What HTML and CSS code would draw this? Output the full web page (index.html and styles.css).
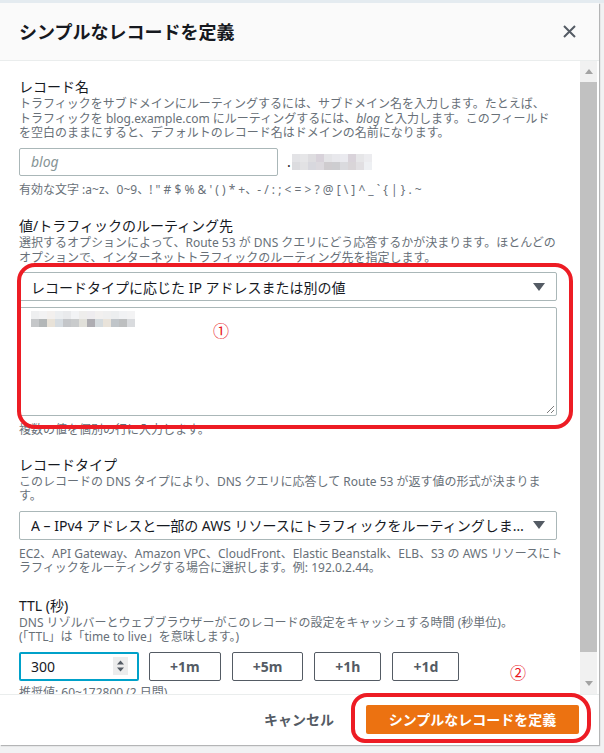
FILE: index.html
```html
<!DOCTYPE html>
<html lang="ja">
<head>
<meta charset="utf-8">
<title>シンプルなレコードを定義</title>
<link rel="stylesheet" href="styles.css">
</head>
<body>
<div class="modal">
  <header class="modal-header">
    <h2 class="title">シンプルなレコードを定義</h2>
    <svg class="close" viewBox="0 0 13 13" aria-label="閉じる"><path d="M1 1L12 12M12 1L1 12"/></svg>
  </header>

  <div class="modal-main">
    <div class="content">
      <section class="field">
        <div class="label">レコード名</div>
        <p class="desc">トラフィックをサブドメインにルーティングするには、サブドメイン名を入力します。たとえば、<br>トラフィックを blog.example.com にルーティングするには、<i>blog</i> と入力します。このフィールド<br>を空白のままにすると、デフォルトのレコード名はドメインの名前になります。</p>
        <div class="name-row">
          <div class="input"><span class="placeholder">blog</span></div>
          <span class="dot">.</span>
          <span class="blur blur-domain"></span>
        </div>
        <p class="hint">有効な文字 :a~z、0~9、! " # $ % &amp; ' ( ) * +、- / : ; &lt; = &gt; ? @ [ \ ] ^ _ ` { | } . ~</p>
      </section>

      <section class="field">
        <div class="label">値/トラフィックのルーティング先</div>
        <p class="desc">選択するオプションによって、Route 53 が DNS クエリにどう応答するかが決まります。ほとんどの<br>オプションで、インターネットトラフィックのルーティング先を指定します。</p>
        <div class="select">
          <span class="select-text">レコードタイプに応じた IP アドレスまたは別の値</span>
          <svg class="caret" viewBox="0 0 12 8"><path d="M0 0H12L6 8Z"/></svg>
        </div>
        <div class="textarea">
          <span class="blur blur-value"></span>
          <svg class="resize" viewBox="0 0 10 10"><path d="M9 2L2 9M9 6L6 9"/></svg>
        </div>
        <p class="hint">複数の値を個別の行に入力します。</p>
      </section>

      <section class="field field-type">
        <div class="label">レコードタイプ</div>
        <p class="desc">このレコードの DNS タイプにより、DNS クエリに応答して Route 53 が返す値の形式が決まりま<br>す。</p>
        <div class="select">
          <span class="select-text">A – IPv4 アドレスと一部の AWS リソースにトラフィックをルーティングします</span>
          <svg class="caret" viewBox="0 0 12 8"><path d="M0 0H12L6 8Z"/></svg>
        </div>
        <p class="hint">EC2、API Gateway、Amazon VPC、CloudFront、Elastic Beanstalk、ELB、S3 の AWS リソースにト<br>ラフィックをルーティングする場合に選択します。例: 192.0.2.44。</p>
      </section>

      <section class="field field-ttl">
        <div class="label">TTL (秒)</div>
        <p class="desc">DNS リゾルバーとウェブブラウザーがこのレコードの設定をキャッシュする時間 (秒単位)。<br>(「TTL」は「time to live」を意味します。)</p>
        <div class="ttl-row">
          <div class="num-input">
            <span>300</span>
            <svg class="spinner" viewBox="0 0 15 18"><rect width="15" height="18"/><path d="M4 7.5H11L7.5 3.5Z M4 10.5H11L7.5 14.5Z"/></svg>
          </div>
          <span class="btn">+1m</span>
          <span class="btn">+5m</span>
          <span class="btn">+1h</span>
          <span class="btn">+1d</span>
        </div>
        <p class="hint constraint">推奨値: 60~172800 (2 日間)</p>
      </section>
    </div>

    <div class="scrollbar">
      <div class="sb-btn"><svg viewBox="0 0 8 5"><path d="M0 5H8L4 0Z"/></svg></div>
      <div class="sb-thumb"></div>
      <div class="sb-rest"></div>
      <div class="sb-btn"><svg viewBox="0 0 8 5"><path d="M0 0H8L4 5Z"/></svg></div>
    </div>
  </div>

  <footer class="modal-footer">
    <span class="cancel">キャンセル</span>
    <span class="primary">シンプルなレコードを定義</span>
  </footer>

  <div class="mark mark-1"></div>
  <div class="mark mark-2"></div>
  <span class="num num-1">①</span>
  <span class="num num-2">②</span>
</div>
</body>
</html>
```

FILE: styles.css
```css
html, body {
  margin: 0;
  padding: 0;
}

body {
  width: 604px;
  height: 753px;
  overflow: hidden;
  background: linear-gradient(#e4ebf0 0 3px, #f1f2f3 3px);
  font-family: "Noto Sans", "Noto Sans CJK JP", sans-serif;
  color: #16191f;
}

.modal {
  position: relative;
  width: 599px;
  height: 742px;
  margin-top: 3px;
  background: #fff;
  display: flex;
  flex-direction: column;
  box-shadow: 1px 1px 1px rgba(0, 0, 0, 0.25);
}

.modal-header {
  flex: none;
  height: 58px;
  box-sizing: border-box;
  background: #fafafa;
  border-bottom: 1px solid #eaeded;
  display: flex;
  align-items: center;
  justify-content: space-between;
  padding: 0 23px 0 19px;
}

.title {
  margin: 0;
  font-size: 18px;
  line-height: 24px;
  font-weight: 700;
  color: #16191f;
}

.close {
  width: 13px;
  height: 13px;
  fill: none;
  stroke: #545b64;
  stroke-width: 2;
}

.modal-main {
  flex: 1;
  min-height: 0;
  display: flex;
  padding-right: 2px;
}

.content {
  flex: 1;
  min-width: 0;
  overflow: hidden;
  padding: 17px 23px 0 19px;
}

.field + .field {
  margin-top: 20px;
}

.field-type {
  margin-top: 18px !important;
}

.field-ttl {
  margin-top: 21px !important;
}

.label {
  font-size: 14px;
  line-height: 18px;
  color: #16191f;
}

.desc,
.hint {
  margin: 1px 0 0;
  font-size: 12px;
  line-height: 14.5px;
  color: #687078;
  white-space: nowrap;
}

.hint {
  margin-top: 7px;
}

.desc i {
  font-style: italic;
}

.name-row {
  margin-top: 7px;
  display: flex;
  align-items: center;
}

.input {
  width: 259px;
  height: 28px;
  box-sizing: border-box;
  border: 1px solid #aab7b8;
  border-radius: 2px;
  padding-left: 11px;
  display: flex;
  align-items: center;
}

.placeholder {
  font-style: italic;
  font-size: 14px;
  color: #879596;
}

.dot {
  margin-left: 9px;
  font-size: 14px;
  line-height: 14px;
  align-self: flex-end;
  margin-bottom: 7px;
  color: #16191f;
}

.blur {
  display: block;
  height: 16px;
  background-repeat: no-repeat;
}

.blur-domain {
  width: 80px;
  margin-left: 1px;
  background-image:
    linear-gradient(90deg, #e3e3e6 0 8px, #e6e6e8 8px 16px, #dedde0 16px 24px, #d8d2da 24px 32px, #e4e4e7 32px 40px, #e8e8ec 40px 48px, #eaeaef 48px 56px, #d9d3da 56px 64px, #e6e6e8 64px 72px, #ececef 72px 80px),
    linear-gradient(90deg, #dcdcdf 0 8px, #e2e2e4 8px 16px, #d8d8de 16px 24px, #dcd9de 24px 32px, #cfcccf 32px 40px, #cdcdd0 40px 48px, #dadade 48px 56px, #d9d5d8 56px 64px, #e1dfe2 64px 72px, #eef0f3 72px 80px);
  background-size: 100% 8px, 100% 8px;
  background-position: top, bottom;
}

.blur-value {
  width: 104px;
  background-image:
    linear-gradient(90deg, #eeeff0 0 8px, #f2f2f3 8px 16px, #f3f0ee 16px 24px, #eceef0 24px 32px, #e9eaec 32px 40px, #f2f3f5 40px 48px, #eeedec 48px 56px, #eeecef 56px 64px, #f2f0ef 64px 72px, #efefef 72px 80px, #eceeef 80px 88px, #f1f2f4 88px 96px, #f3f3f4 96px 104px),
    linear-gradient(90deg, #c5c7c9 0 8px, #b3b7b8 8px 16px, #e8e2d8 16px 24px, #d6dce1 24px 32px, #c4c6c9 32px 40px, #c9cbcc 40px 48px, #e1e0da 48px 56px, #aeadb2 56px 64px, #d5dbde 64px 72px, #e9e3da 72px 80px, #c0c5c9 80px 88px, #bdbfc0 88px 96px, #d9dbde 96px 104px);
  background-size: 100% 8px, 100% 8px;
  background-position: top, bottom;
}

.select {
  margin-top: 7px;
  height: 29px;
  box-sizing: border-box;
  border: 1px solid #aab7b8;
  border-radius: 2px;
  padding: 0 11px 0 11px;
  display: flex;
  align-items: center;
  font-size: 14px;
  color: #16191f;
}

.select-text {
  flex: 1;
  min-width: 0;
  white-space: nowrap;
  overflow: hidden;
  text-overflow: ellipsis;
  margin-right: 8px;
}

.caret {
  flex: none;
  width: 12px;
  height: 8px;
  fill: #545b64;
}

.textarea {
  position: relative;
  margin-top: 6px;
  height: 109px;
  box-sizing: border-box;
  border: 1px solid #aab7b8;
  border-radius: 2px;
  padding: 3px 11px;
}

.resize {
  position: absolute;
  right: 1px;
  bottom: 1px;
  width: 10px;
  height: 10px;
  fill: none;
  stroke: #7d7d7d;
  stroke-width: 1;
}

.ttl-row {
  margin-top: 7px;
  display: flex;
  align-items: center;
}

.num-input {
  width: 120px;
  height: 29px;
  box-sizing: border-box;
  border: 2px solid #00a1c9;
  border-radius: 2px;
  padding: 0 9px 0 10px;
  display: flex;
  align-items: center;
  justify-content: space-between;
  font-size: 14px;
  color: #16191f;
  margin-right: 10px;
}

.spinner {
  width: 15px;
  height: 18px;
}

.spinner rect {
  fill: #ececec;
}

.spinner path {
  fill: #545b64;
}

.btn {
  height: 29px;
  box-sizing: border-box;
  border: 1px solid #545b64;
  border-radius: 2px;
  padding: 0 20px;
  display: flex;
  align-items: center;
  font-size: 14px;
  font-weight: 700;
  color: #545b64;
}

.btn + .btn {
  margin-left: 11px;
}

.constraint {
  margin-top: 5px;
}

.scrollbar {
  flex: none;
  width: 17px;
  background: #f1f1f1;
  display: flex;
  flex-direction: column;
}

.sb-btn {
  flex: none;
  height: 21px;
  display: flex;
  align-items: center;
  justify-content: center;
}

.sb-btn svg {
  width: 8px;
  height: 5px;
  fill: #a3a3a3;
}

.sb-thumb {
  flex: none;
  height: 570px;
  background: #c1c1c1;
}

.sb-rest {
  flex: 1;
}

.modal-footer {
  flex: none;
  height: 51px;
  box-sizing: border-box;
  border-top: 1px solid #eaeded;
  display: flex;
  align-items: center;
  justify-content: flex-end;
  padding: 0 20px 2px 0;
}

.cancel {
  font-size: 14px;
  font-weight: 700;
  color: #545b64;
  margin-right: 32px;
}

.primary {
  width: 213px;
  height: 29px;
  border-radius: 2px;
  background: #ec7211;
  color: #fff;
  font-size: 14px;
  font-weight: 700;
  display: flex;
  align-items: center;
  justify-content: center;
}

.mark {
  position: absolute;
  box-sizing: border-box;
  border: 4px solid #ed1c24;
  pointer-events: none;
}

.mark-1 {
  left: 17px;
  top: 260px;
  width: 556px;
  height: 166px;
  border-radius: 18px;
}

.mark-2 {
  left: 351px;
  top: 690px;
  width: 240px;
  height: 50px;
  border-radius: 16px 20px 18px 14px;
}

.num {
  position: absolute;
  font-family: "Noto Sans CJK JP", sans-serif;
  font-size: 16px;
  line-height: 16px;
  color: #e8141c;
}

.num-1 {
  left: 213px;
  top: 319px;
}

.num-2 {
  left: 510px;
  top: 661px;
}
```
